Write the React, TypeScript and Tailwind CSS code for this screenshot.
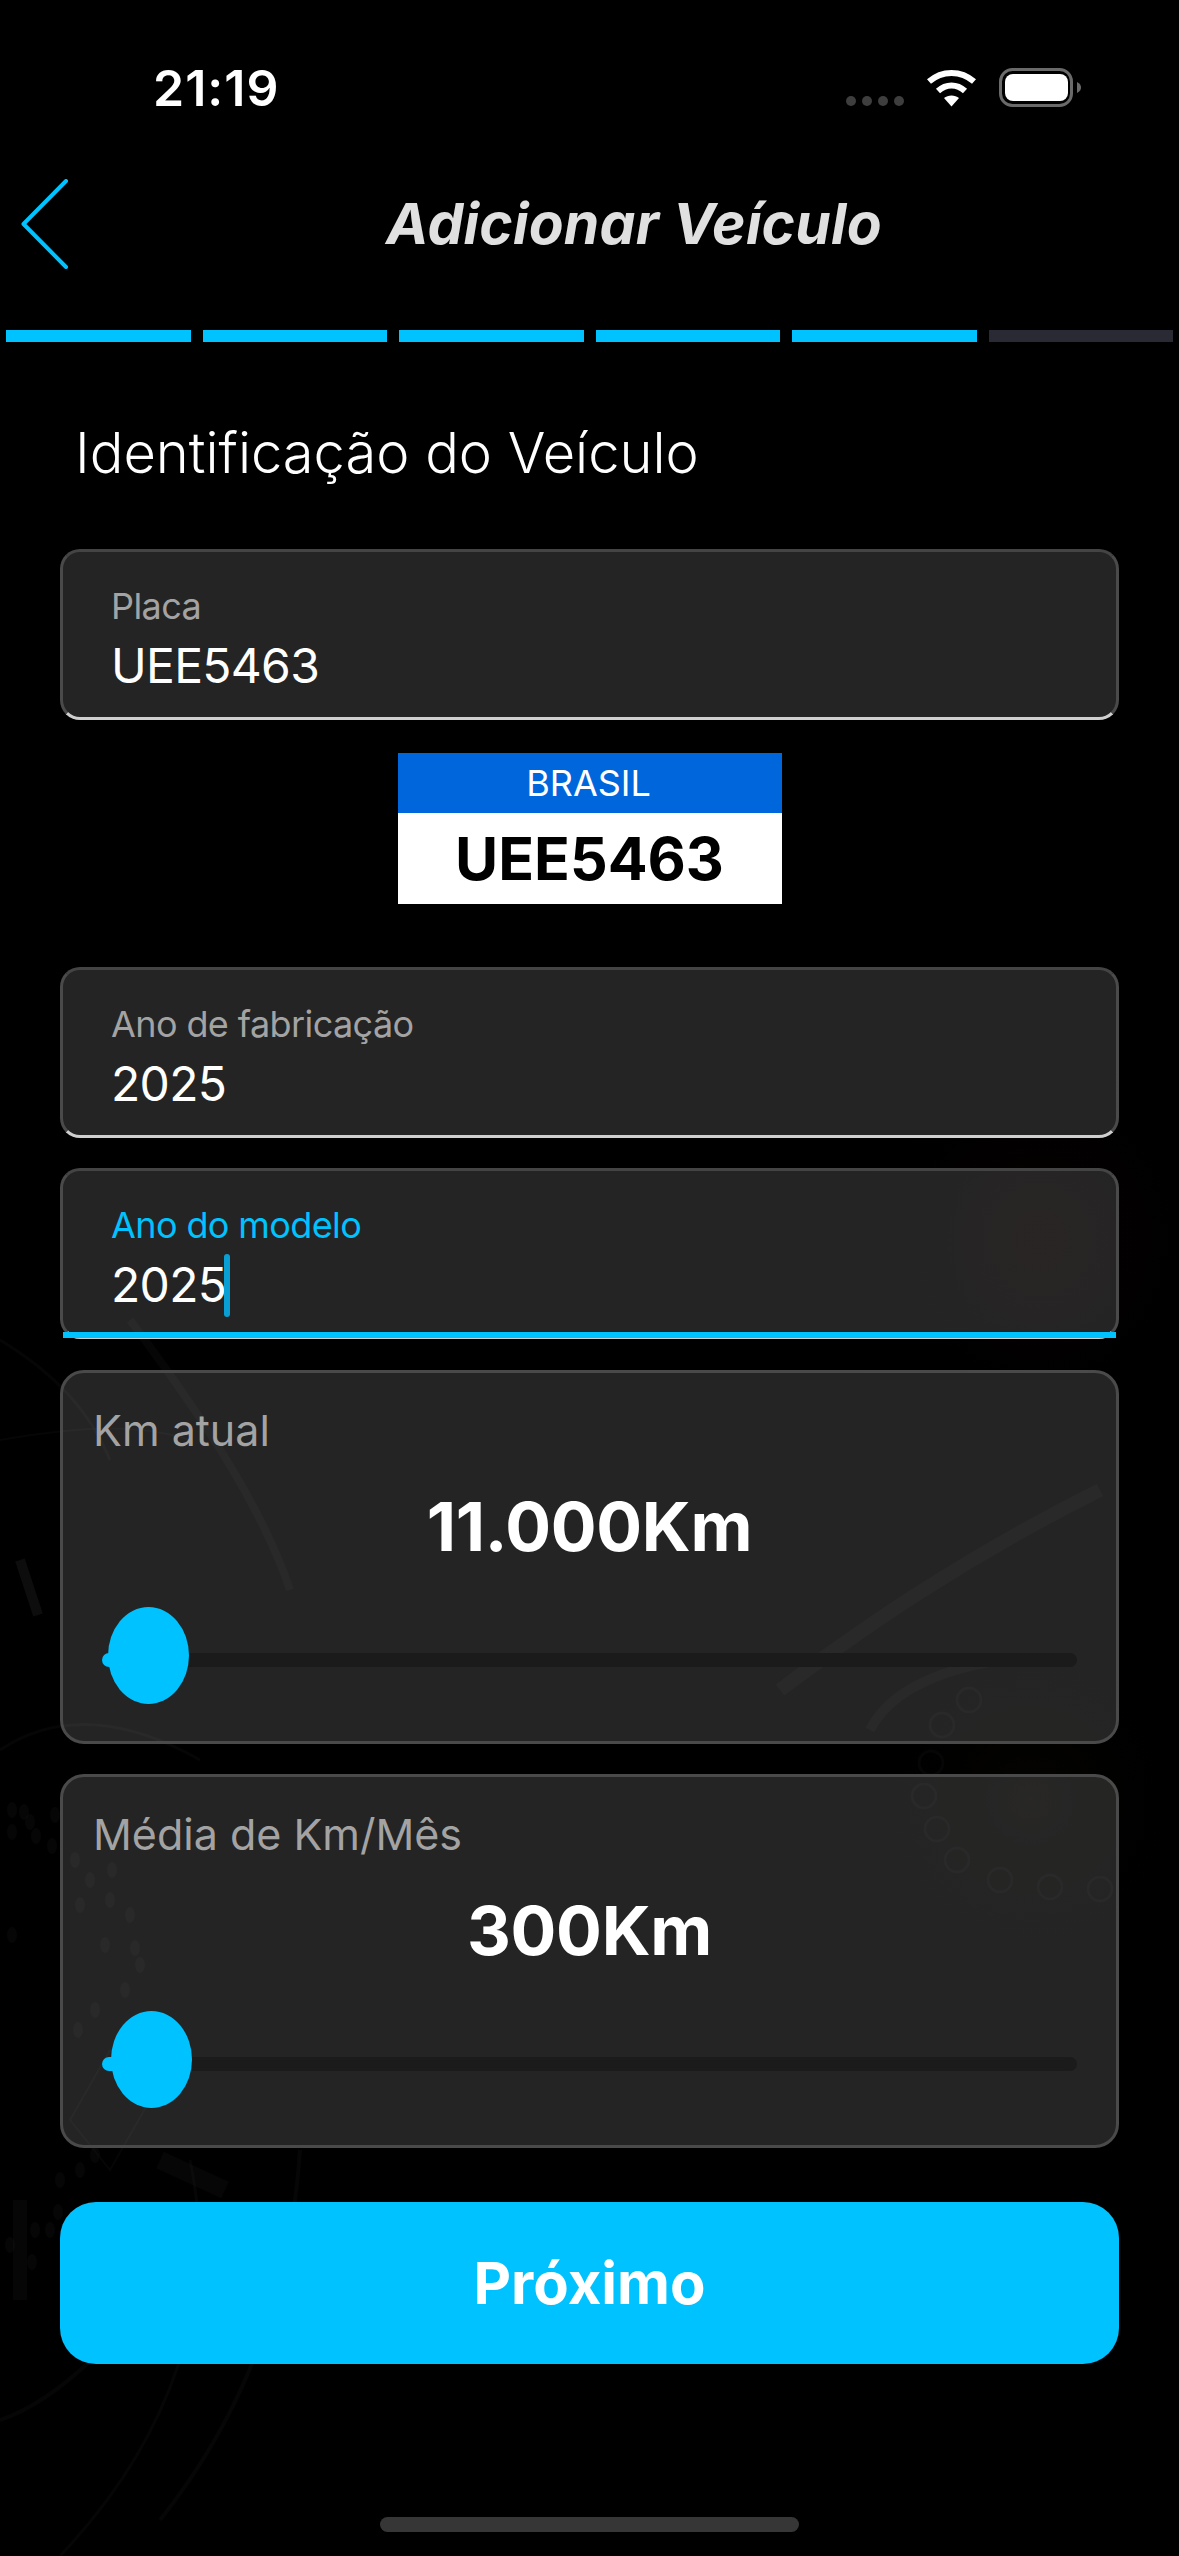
const STEPS = [true, true, true, true, true, false];

const LEFT_DOTS = [
  [12, 1810], [24, 1812], [30, 1822], [12, 1832], [36, 1836], [55, 1815], [52, 1846], [75, 1860], [90, 1880], [112, 1870],
  [80, 1905], [110, 1900], [130, 1915], [105, 1945], [135, 1948], [12, 1935], [125, 1990], [140, 1965], [95, 2010], [78, 2030],
  [95, 2155], [80, 2170], [58, 2212], [35, 2230], [50, 2230], [10, 2245], [32, 2262], [60, 2180],
];

const RIGHT_RINGS = [
  [969, 1700], [942, 1725], [931, 1763], [924, 1796], [937, 1829], [957, 1860], [1000, 1880], [1050, 1887], [1100, 1889],
];

const CarBackdrop = () => (
  <svg className="absolute inset-0 h-full w-full" viewBox="0 0 1179 2556" fill="none">
    <defs>
      <radialGradient id="redGlow">
        <stop offset="0%" stopColor="#2a0505" stopOpacity="0.15" />
        <stop offset="100%" stopColor="#000000" stopOpacity="0" />
      </radialGradient>
      <radialGradient id="amberGlow">
        <stop offset="0%" stopColor="#1a1608" stopOpacity="0.2" />
        <stop offset="100%" stopColor="#000000" stopOpacity="0" />
      </radialGradient>
    </defs>
    <ellipse cx="1040" cy="1240" rx="240" ry="260" fill="url(#redGlow)" />
    <ellipse cx="1030" cy="1800" rx="170" ry="170" fill="url(#amberGlow)" />
    <g stroke="#ffffff" strokeOpacity="0.022">
      <path d="M0 1340 C50 1370 90 1410 110 1460" strokeWidth="3" />
      <path d="M0 1440 C60 1430 130 1420 190 1440" strokeWidth="2" />
      <path d="M130 1320 C190 1400 260 1500 290 1590" strokeWidth="8" />
      <path d="M20 1560 L38 1615" strokeWidth="10" strokeOpacity="0.05" />
      <path d="M780 1690 C860 1630 960 1560 1100 1490" strokeWidth="14" />
      <path d="M870 1730 C890 1690 940 1670 1000 1660" strokeWidth="10" />
      <path d="M0 1750 C60 1710 130 1720 200 1760" strokeWidth="3" />
      <path d="M190 2160 C220 2300 170 2440 60 2556" strokeWidth="3" />
      <path d="M300 2150 C290 2300 240 2420 160 2520" strokeWidth="4" />
      <path d="M0 2420 C60 2400 130 2330 170 2260" strokeWidth="4" />
      <path d="M20 2300 L20 2200" strokeWidth="14" />
      <path d="M70 2120 L110 2050 L150 2100 L110 2170 Z" strokeWidth="2" />
      <path d="M160 2160 L225 2190" strokeWidth="18" />
      {RIGHT_RINGS.map(([cx, cy]) => (
        <circle key={`${cx}-${cy}`} cx={cx} cy={cy} r="12" strokeWidth="3" />
      ))}
    </g>
    <g fill="#ffffff" fillOpacity="0.025">
      {LEFT_DOTS.map(([cx, cy]) => (
        <ellipse key={`${cx}-${cy}`} cx={cx} cy={cy} rx="5" ry="8" />
      ))}
    </g>
  </svg>
);

const StatusBar = () => (
  <div className="flex h-[130px] items-start justify-between pl-[153px] pr-[98px] pt-[62px]">
    <span className="text-[50px] leading-[52px] font-semibold tracking-[1px] text-white">21:19</span>
    <div className="mt-[6px] flex items-end">
      <div className="mb-[1px] flex gap-[6px]">
        <span className="h-[10px] w-[10px] rounded-full bg-[#3e3e3e]" />
        <span className="h-[10px] w-[10px] rounded-full bg-[#3e3e3e]" />
        <span className="h-[10px] w-[10px] rounded-full bg-[#3e3e3e]" />
        <span className="h-[10px] w-[10px] rounded-full bg-[#3e3e3e]" />
      </div>
      <svg className="ml-[22px]" width="51" height="38" viewBox="0 0 51 38" fill="none">
        <path d="M3 12.5 C16 1 35 1 48 12.5" stroke="#fff" strokeWidth="6" />
        <path d="M12 22 C20 14.5 31 14.5 39 22" stroke="#fff" strokeWidth="6" />
        <path d="M18 29 C22 25.5 29 25.5 33 29 L25.5 37.5 Z" fill="#fff" />
      </svg>
      <svg className="ml-[22px]" width="82" height="39" viewBox="0 0 82 39" fill="none">
        <rect x="1.5" y="1.5" width="71" height="36" rx="12" stroke="#6a6a6a" strokeWidth="3" />
        <rect x="6" y="6" width="63" height="27" rx="8" fill="#fff" />
        <path d="M78 14 C81 15.5 82 17.5 82 19.5 C82 21.5 81 23.5 78 25 Z" fill="#6a6a6a" />
      </svg>
    </div>
  </div>
);

const Header = () => (
  <div className="flex h-[200px] items-center pb-[12px] pl-[21px]">
    <svg width="48" height="90" viewBox="0 0 48 90" fill="none">
      <path d="M45 2 L2.5 45 L45 88" stroke="#00c2ff" strokeWidth="4" strokeLinecap="round" strokeLinejoin="round" />
    </svg>
    <h1 className="ml-[317px] text-[57px] leading-[64px] font-bold tracking-[0.2px] whitespace-nowrap text-[#e0e0e0] italic">
      Adicionar Veículo
    </h1>
  </div>
);

const StepBar = () => (
  <div className="flex h-[12px] gap-[12px] px-[6px]">
    {STEPS.map((done, i) => (
      <div key={i} className={done ? 'flex-1 bg-[#00c2ff]' : 'flex-1 bg-[#2a2a35]'} />
    ))}
  </div>
);

type InputProps = {
  label: string;
  value: string;
  focused?: boolean;
};

const FloatingInput = ({ label, value, focused }: InputProps) => (
  <div className="relative h-[171px] rounded-[20px] border-x-[3px] border-t-[3px] border-b-[3px] border-x-[#4a4a4a] border-t-[#444444] border-b-[#cfcfcf] bg-white/14 pl-[48px]">
    <div
      className={
        focused
          ? 'pt-[32px] text-[36px] leading-[44px] tracking-[-0.6px] text-[#00c2ff]'
          : 'pt-[32px] text-[36px] leading-[44px] tracking-[-0.6px] text-[#a3a3a3]'
      }
    >
      {label}
    </div>
    <div className="mt-[9px] flex items-center text-[48px] leading-[58px] tracking-[-0.7px] text-white">
      {value}
      {focused && <span className="-my-[3px] -ml-[2px] h-[63px] w-[6px] rounded-full bg-[#0a9fd4]" />}
    </div>
    {focused && <div className="absolute right-[0px] bottom-[-2px] left-[0px] h-[6px] bg-[#00c2ff]" />}
  </div>
);

const Plate = () => (
  <div className="mx-auto mt-[33px] w-[384px]">
    <div className="flex h-[60px] items-center justify-center bg-[#0066dc] pr-[2px] text-[36px] text-white">BRASIL</div>
    <div className="flex h-[91px] items-center justify-center bg-white pt-[2px] text-[59px] font-bold text-black">
      UEE5463
    </div>
  </div>
);

type SliderProps = {
  label: string;
  value: string;
  thumbLeft: string;
};

const SliderCard = ({ label, value, thumbLeft }: SliderProps) => (
  <div className="h-[374px] rounded-[24px] border-[3px] border-[#4a4a4a] bg-white/14 pt-[29px]">
    <div className="pl-[30px] text-[43px] leading-[56px] text-[#a3a3a3]">{label}</div>
    <div className="mt-[27px] text-center text-[68px] leading-[82px] font-bold tracking-[-0.3px] text-white">{value}</div>
    <div className="relative mx-[39px] mt-[86px] h-[14px] rounded-full bg-[#1b1b1b]">
      <div className="absolute top-0 left-0 h-[14px] w-[40px] rounded-full bg-[#00c2ff]" />
      <div className={`absolute top-[-46px] h-[97px] w-[81px] rounded-[50%] bg-[#00c2ff] ${thumbLeft}`} />
    </div>
  </div>
);

const App = () => (
  <div className="relative h-[2556px] w-[1179px] overflow-hidden bg-black font-['Inter',sans-serif]">
    <CarBackdrop />
    <div className="relative flex h-full flex-col">
      <StatusBar />
      <Header />
      <StepBar />
      <h2 className="mt-[77px] ml-[75px] text-[56px] leading-[68px] font-light text-white">Identificação do Veículo</h2>
      <div className="mt-[62px] flex flex-col px-[60px]">
        <FloatingInput label="Placa" value="UEE5463" />
        <Plate />
        <div className="mt-[63px]">
          <FloatingInput label="Ano de fabricação" value="2025" />
        </div>
        <div className="mt-[30px]">
          <FloatingInput label="Ano do modelo" value="2025" focused />
        </div>
        <div className="mt-[31px]">
          <SliderCard label="Km atual" value="11.000Km" thumbLeft="left-[6px]" />
        </div>
        <div className="mt-[30px]">
          <SliderCard label="Média de Km/Mês" value="300Km" thumbLeft="left-[9px]" />
        </div>
        <button className="mt-[54px] h-[162px] rounded-[36px] bg-[#00c2ff] text-[58px] font-bold text-white">
          Próximo
        </button>
      </div>
      <div className="mx-auto mt-[153px] h-[15px] w-[419px] rounded-full bg-[#363636]" />
    </div>
  </div>
);

export default App;
